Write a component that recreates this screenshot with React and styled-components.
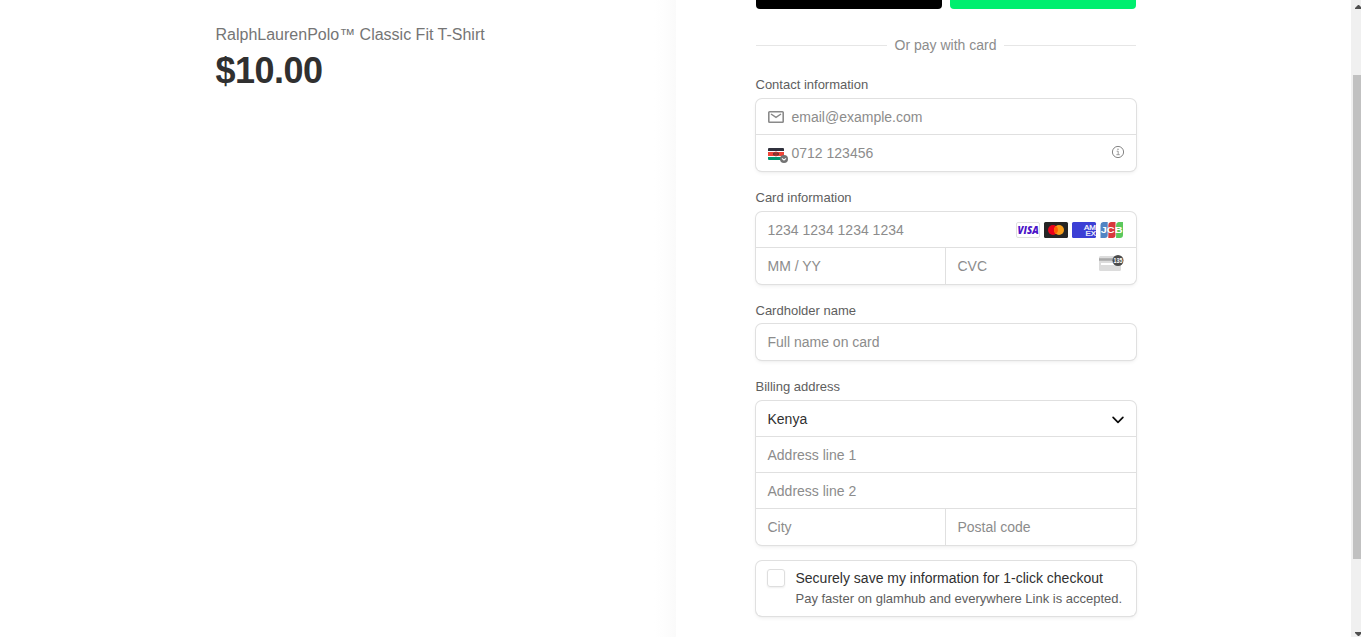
import React from "react";
import styled, { createGlobalStyle } from "styled-components";

const GlobalStyle = createGlobalStyle`
  * { box-sizing: border-box; }
  html, body { margin: 0; height: 100%; overflow: hidden; background: #fff; }
  body { font-family: "Liberation Sans", Arial, sans-serif; color: #303030; }
`;

const Page = styled.div`
  display: flex;
  height: 637px;
  overflow: hidden;
`;

const Overview = styled.section`
  flex: 0 0 676px;
  padding: 24px 80px 0 215.5px;
  background: linear-gradient(to left, #fafafa 0, #fcfcfc 7px, #fefefe 16px, #fff 22px);
`;

const ProductName = styled.h1`
  margin: 0;
  font-size: 16px;
  font-weight: 400;
  line-height: 21px;
  white-space: nowrap;
  color: #757575;
`;

const Price = styled.div`
  margin-top: 5px;
  font-size: 36px;
  font-weight: 700;
  line-height: 41px;
  letter-spacing: -0.5px;
`;

const Payment = styled.main`
  flex: 1;
  padding-left: 79.5px;
`;

const Form = styled.form`
  width: 380px;
`;

const Wallets = styled.div`
  display: grid;
  grid-template-columns: 1fr 1fr;
  gap: 8px;
  height: 9px;
`;

const WalletButton = styled.div`
  background: ${(p) => p.$color};
  border-radius: 0 0 4px 4px;
`;

const Divider = styled.div`
  display: flex;
  align-items: center;
  gap: 8px;
  height: 20px;
  margin-top: 26px;
  font-size: 14px;
  line-height: 20px;
  color: #8c8c8c;

  &::before, &::after {
    content: "";
    flex: 1;
    height: 1px;
    margin-top: 1px;
    background: #e6e6e6;
  }
`;

const Section = styled.section`
  margin-top: ${(p) => p.$top}px;
`;

const Label = styled.h2`
  margin: 0 0 ${(p) => p.$gap ?? 6}px;
  font-size: 13px;
  font-weight: 400;
  line-height: 17px;
  color: #5e5e5e;
`;

const Group = styled.div`
  display: flex;
  flex-direction: column;
  gap: 1px;
  background: #e0e0e0;
  border-radius: 6px;
  box-shadow: 0 0 0 1px #e0e0e0, 0 2px 4px rgba(0, 0, 0, 0.07), 0 1px 1.5px rgba(0, 0, 0, 0.05);
  overflow: hidden;
`;

const Field = styled.div`
  display: flex;
  flex: ${(p) => p.$basis ? `0 0 ${p.$basis}px` : "1"};
  align-items: center;
  padding: 0 12px;
  background: #fff;
  font-size: 14px;
  line-height: 20px;
  color: ${(p) => (p.$filled ? "#303030" : "#8c8c8c")};
`;

const Row = styled.div`
  display: flex;
  gap: 1px;
  height: 35px;

  &:last-child { height: 36px; }
  &:last-child > ${Field} { padding-bottom: 1px; }
`;

const Value = styled.span`
  flex: 1;
  margin-top: 1px;
  white-space: nowrap;
`;

const Icon = styled.svg`
  display: block;
  flex: none;
  overflow: visible;
  margin: ${(p) => p.$margin || 0};
`;

const Brands = styled.div`
  display: flex;
  gap: 4px;
  margin-top: 1px;
`;

const SaveCard = styled.label`
  display: flex;
  gap: 10px;
  height: 55px;
  margin-top: 16px;
  padding: 8px 0 0 11px;
  border-radius: 6px;
  box-shadow: 0 0 0 1px #e0e0e0, 0 2px 4px rgba(0, 0, 0, 0.07), 0 1px 1.5px rgba(0, 0, 0, 0.05);
`;

const Checkbox = styled.span`
  width: 18px;
  height: 18px;
  border: 1px solid #dedede;
  border-radius: 3px;
  box-shadow: 0 1px 2px rgba(0, 0, 0, 0.07);
`;

const SaveText = styled.div`
  margin-left: 1px;
  font-size: 14px;
  line-height: 19px;
  white-space: nowrap;
`;

const SaveHint = styled.div`
  margin-top: 1px;
  font-size: 13px;
  color: #5e5e5e;
`;

const Scrollbar = styled.aside`
  display: flex;
  flex: 0 0 10px;
  flex-direction: column;
  align-items: flex-end;
  justify-content: space-between;
  background: #f0f0f0;
`;

const Thumb = styled.div`
  width: 8px;
  height: 484px;
  margin-top: 61px;
  margin-bottom: auto;
  background: #c1c1c1;
`;

const Mail = () => (
  <Icon width="16" height="12" viewBox="0 0 16 12" $margin="1px 8px 0 0" fill="none" stroke="#8a8a8a">
    <rect x=".8" y=".8" width="14.4" height="10.4" rx=".8" strokeWidth="1.600" />
    <path d="M3 3l5 3.400L13 3" strokeWidth="1.500" />
  </Icon>
);

const KenyaFlag = () => (
  <Icon width="16" height="12" viewBox="0 0 16 12" $margin="3px 8px 0 0">
    <rect width="16" height="12" rx="1" fill="#fff" />
    <path d="M0 3V1a1 1 0 0 1 1-1h14a1 1 0 0 1 1 1v2z" fill="#30313d" />
    <path d="M0 4h16v4H0z" fill="#f04438" />
    <path d="M0 9h16v2a1 1 0 0 1-1 1H1a1 1 0 0 1-1-1z" fill="#00966e" />
    <ellipse cx="8" cy="6" rx="2" ry="2.400" fill="#d83a30" />
    <path d="M6.500 4Q3.800 6 6.500 8zM9.500 4Q12.200 6 9.500 8zM7.600 4.500h.8v3h-.8z" fill="#303030" />
    <circle cx="16" cy="11" r="4" fill="#737373" />
    <path d="M14 10.300l2 1.800 2-1.800" fill="none" stroke="#fff" strokeWidth="1.100" />
  </Icon>
);

const Info = () => (
  <Icon width="12" height="12" viewBox="0 0 12 12" $margin="-2px 0 0 0" fill="none" stroke="#858585">
    <circle cx="6" cy="6" r="5.600" />
    <path d="M4.700 5.200h1.500v3.400M4.400 8.700h3.400" strokeWidth=".8" />
    <circle cx="6" cy="3.300" r=".7" fill="#858585" stroke="none" />
  </Icon>
);

const Visa = () => (
  <Icon width="24" height="16" viewBox="0 0 24 16">
    <rect x=".5" y=".5" width="23" height="15" rx="1.500" fill="#fff" stroke="#dfdfdf" />
    <text x="1.600" y="11.500" fontFamily="Open Sans" fontSize="9.600" fontWeight="800" fontStyle="italic" textLength="21.200" lengthAdjust="spacingAndGlyphs" fill="#4b13c8">VISA</text>
  </Icon>
);

const Mastercard = () => (
  <Icon width="24" height="16" viewBox="0 0 24 16">
    <rect width="24" height="16" rx="1.500" fill="#252525" />
    <circle cx="9" cy="8" r="5" fill="#eb001b" />
    <circle cx="15" cy="8" r="5" fill="#f79e1b" />
    <path d="M12 4a5 5 0 0 1 0 8a5 5 0 0 1 0-8" fill="#ff5f00" />
  </Icon>
);

const Amex = () => (
  <Icon width="24" height="16" viewBox="0 0 24 16">
    <rect width="24" height="16" rx="1.500" fill="#3c3fd5" />
    <g fill="#fff" fontFamily="Liberation Sans" fontWeight="400" stroke="#fff" strokeWidth=".2" fontSize="7">
      <text x="12" y="7.900" textLength="12" lengthAdjust="spacingAndGlyphs">AM</text>
      <text x="13.500" y="14" textLength="10.500" lengthAdjust="spacingAndGlyphs">EX</text>
    </g>
  </Icon>
);

const Jcb = () => (
  <Icon width="24" height="16" viewBox="0 0 24 16">
    <path d="M3 0h4.700v13a3 3 0 0 1-3 3H.5V3A3 3 0 0 1 3 0z" fill="#5185c4" />
    <path d="M10.800 0h4.700v13a3 3 0 0 1-3 3H8.300V3a3 3 0 0 1 2.500-3z" fill="#d8383c" />
    <path d="M18.600 0H23v13a3 3 0 0 1-3 3h-3.900V3a3 3 0 0 1 2.500-3z" fill="#5bc85c" />
    <text x=".8" y="11.200" fontFamily="Liberation Sans" fontSize="9" fontWeight="700" textLength="21.800" lengthAdjust="spacingAndGlyphs" fill="#fff">JCB</text>
  </Icon>
);

const Cvc = () => (
  <Icon width="25" height="16" viewBox="0 0 25 16" $margin="-6px 0 0 0">
    <rect y="1" width="22" height="15" rx="1.500" fill="#dcdcdc" />
    <path d="M0 3.300h22v2.400H0z" fill="#a9a9a9" />
    <path d="M2 8h18v2H2z" fill="#fff" />
    <circle cx="19" cy="5.500" r="5.500" fill="#4b4b4b" />
    <text x="14.600" y="8.300" fontFamily="Liberation Sans" fontSize="8" fontWeight="700" textLength="9" lengthAdjust="spacingAndGlyphs" fill="#fff">135</text>
  </Icon>
);

const Chevron = () => (
  <Icon width="12" height="8" viewBox="0 0 12 8" $margin="2px 0 0 0" fill="none">
    <path d="M1.100 1.400L6 6.300l4.900-4.900" stroke="#0a0a0a" strokeWidth="1.700" strokeLinecap="round" strokeLinejoin="round" />
  </Icon>
);

export default function App() {
  return (
    <>
      <GlobalStyle />
      <Page>
        <Overview>
          <ProductName>RalphLaurenPolo™ Classic Fit T-Shirt</ProductName>
          <Price>$10.00</Price>
        </Overview>
        <Payment>
          <Form>
            <Wallets>
              <WalletButton $color="#000" />
              <WalletButton $color="#00ef6f" />
            </Wallets>
            <Divider>Or pay with card</Divider>
            <Section $top={21}>
              <Label>Contact information</Label>
              <Group>
                <Row><Field><Mail /><Value>email@example.com</Value></Field></Row>
                <Row><Field><KenyaFlag /><Value>0712 123456</Value><Info /></Field></Row>
              </Group>
            </Section>
            <Section $top={18}>
              <Label>Card information</Label>
              <Group>
                <Row>
                  <Field>
                    <Value>1234 1234 1234 1234</Value>
                    <Brands><Visa /><Mastercard /><Amex /><Jcb /></Brands>
                  </Field>
                </Row>
                <Row>
                  <Field $basis={189}><Value>MM / YY</Value></Field>
                  <Field><Value>CVC</Value><Cvc /></Field>
                </Row>
              </Group>
            </Section>
            <Section $top={18}>
              <Label $gap={5}>Cardholder name</Label>
              <Group>
                <Row><Field><Value>Full name on card</Value></Field></Row>
              </Group>
            </Section>
            <Section $top={18}>
              <Label>Billing address</Label>
              <Group>
                <Row><Field $filled><Value>Kenya</Value><Chevron /></Field></Row>
                <Row><Field><Value>Address line 1</Value></Field></Row>
                <Row><Field><Value>Address line 2</Value></Field></Row>
                <Row>
                  <Field $basis={189}><Value>City</Value></Field>
                  <Field><Value>Postal code</Value></Field>
                </Row>
              </Group>
            </Section>
            <SaveCard>
              <Checkbox />
              <SaveText>
                Securely save my information for 1-click checkout
                <SaveHint>Pay faster on glamhub and everywhere Link is accepted.</SaveHint>
              </SaveText>
            </SaveCard>
          </Form>
        </Payment>
        <Scrollbar>
          <Icon width="6" height="14" viewBox="0 0 6 14"><path d="M0 9V8l3-3h1l2 2v2z" fill="#505050" /></Icon>
          <Thumb />
          <Icon width="6" height="14" viewBox="0 0 6 14"><path d="M0 9v1l3 3h1l2-2V9z" fill="#505050" /></Icon>
        </Scrollbar>
      </Page>
    </>
  );
}
